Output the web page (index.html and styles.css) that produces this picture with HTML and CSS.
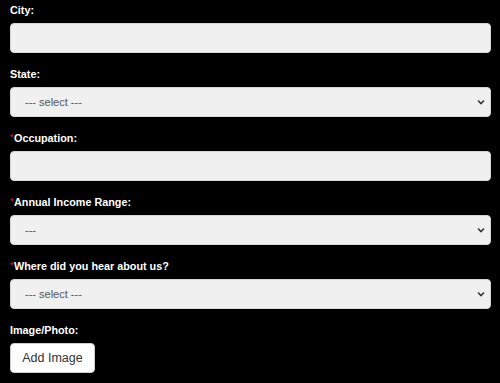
FILE: index.html
```html
<!DOCTYPE html>
<html>
<head>
<meta charset="utf-8">
<link rel="stylesheet" href="styles.css">
</head>
<body>
<form class="form">
  <div class="field">
    <label class="label">City:</label>
    <input class="control" type="text">
  </div>
  <div class="field">
    <label class="label">State:</label>
    <div class="select-wrap">
      <select class="control select"><option>--- select ---</option></select>
      <svg class="chevron" width="8" height="6" viewBox="0 0 8 6"><path d="M1 1.5 L4 4.5 L7 1.5" fill="none" stroke="#333" stroke-width="1.6"/></svg>
    </div>
  </div>
  <div class="field">
    <label class="label"><span class="req">*</span>Occupation:</label>
    <input class="control" type="text">
  </div>
  <div class="field">
    <label class="label"><span class="req">*</span>Annual Income Range:</label>
    <div class="select-wrap">
      <select class="control select"><option>---</option></select>
      <svg class="chevron" width="8" height="6" viewBox="0 0 8 6"><path d="M1 1.5 L4 4.5 L7 1.5" fill="none" stroke="#333" stroke-width="1.6"/></svg>
    </div>
  </div>
  <div class="field">
    <label class="label"><span class="req">*</span>Where did you hear about us?</label>
    <div class="select-wrap">
      <select class="control select"><option>--- select ---</option></select>
      <svg class="chevron" width="8" height="6" viewBox="0 0 8 6"><path d="M1 1.5 L4 4.5 L7 1.5" fill="none" stroke="#333" stroke-width="1.6"/></svg>
    </div>
  </div>
  <div class="field">
    <label class="label">Image/Photo:</label>
    <div><button type="button" class="btn">Add Image</button></div>
  </div>
</form>
</body>
</html>
```
FILE: styles.css
```css
html, body {
  margin: 0;
  background: #000;
}
body {
  padding: 4px 9px 0 10px;
  font-family: "Liberation Sans", Arial, sans-serif;
}
.form {
  display: flex;
  flex-direction: column;
  gap: 15px;
}
.field {
  display: flex;
  flex-direction: column;
  gap: 7px;
}
.label {
  display: block;
  color: #fff;
  font-weight: bold;
  font-size: 10.8px;
  line-height: 12px;
  height: 12px;
}
.req {
  color: #b0102a;
  font-size: 9px;
  vertical-align: top;
  line-height: 10px;
  margin-right: 0.5px;
}
.control {
  box-sizing: border-box;
  display: block;
  width: 100%;
  height: 30px;
  margin: 0;
  background: #f0f0f0;
  border: 1px solid #d6d6d6;
  border-radius: 4px;
  font-family: "Liberation Sans", Arial, sans-serif;
  font-size: 11px;
  color: #555;
  padding: 0 14px;
  outline: none;
}
.select-wrap {
  position: relative;
}
.select {
  appearance: none;
  -webkit-appearance: none;
}
.chevron {
  position: absolute;
  right: 6px;
  top: 12px;
}
.btn {
  box-sizing: border-box;
  height: 30px;
  width: 85px;
  background: #fff;
  border: 1px solid #ccc;
  border-radius: 4px;
  color: #333;
  font-family: "Liberation Sans", Arial, sans-serif;
  font-size: 12.5px;
  padding: 0;
  margin: 0;
}
```
